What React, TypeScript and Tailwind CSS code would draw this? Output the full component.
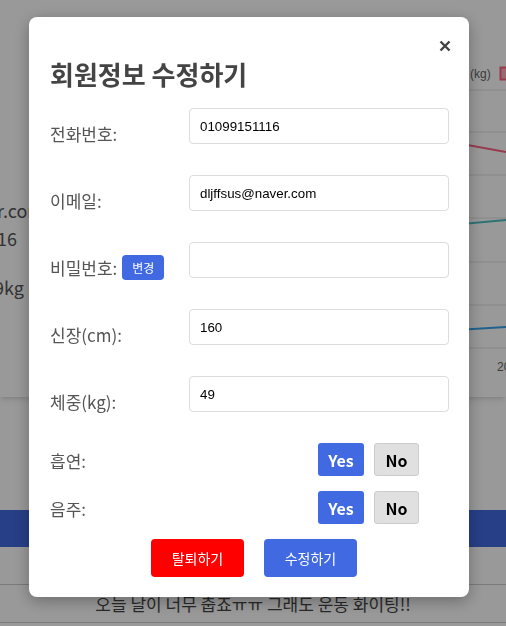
import React from "react";

const font = { fontFamily: '"Noto Sans CJK KR", "Noto Sans", sans-serif' };

function Field({ label, value, extra }: { label: string; value: string; extra?: boolean }) {
  return (
    <div className="flex h-9 items-end">
      <div className="-mb-0.5 flex w-[139px] items-center text-[17px] leading-6 text-[#555]">
        <span>{label}</span>
        {extra && (
          <button className="ml-[5px] h-[25px] w-[42px] rounded bg-[#4169e1] text-xs leading-[25px] text-white">
            변경
          </button>
        )}
      </div>
      <input
        defaultValue={value}
        className="h-9 flex-1 rounded border border-[#ddd] bg-white pl-[10px] text-[13.33px] text-black outline-none"
        style={{ fontFamily: '"Liberation Sans", Arial, sans-serif' }}
      />
    </div>
  );
}

function Toggle({ label }: { label: string }) {
  return (
    <div className="flex h-[33px] items-center">
      <span className="flex-1 pt-[3px] text-[17px] leading-6 text-[#555]">{label}</span>
      <div className="mr-[30px] flex gap-[10px]">
        <button className="h-[33px] w-[46px] rounded-[3px] bg-[#4169e1] text-base font-bold text-white">Yes</button>
        <button className="h-[33px] w-[45px] rounded-[3px] border border-[#ccc] bg-[#e0e0e0] text-base font-bold text-black">
          No
        </button>
      </div>
    </div>
  );
}

export default function App() {
  return (
    <div className="relative h-[626px] w-[506px] overflow-hidden bg-white" style={font}>
      {/* page behind the modal */}
      <div className="flex h-[397px] bg-white shadow-md">
        <div className="flex w-[250px] flex-col pt-[196px] text-lg text-[#555]">
          <div className="flex w-[44px] justify-end whitespace-nowrap leading-7">dljffsus@naver.com</div>
          <div className="flex w-[17px] justify-end whitespace-nowrap leading-7">01099151116</div>
          <div className="mt-[21px] flex w-[24px] justify-end whitespace-nowrap leading-7">49kg</div>
        </div>
        <div className="flex-1">
          <svg width="256" height="397" viewBox="0 0 256 397">
            {[90, 132, 175, 218, 262, 305, 348].map((y) => (
              <line key={y} x1="180" y1={y} x2="256" y2={y} stroke="#e2e2e2" strokeWidth="1" />
            ))}
            <text x="220" y="78" fontSize="12" fill="#666" fontFamily="Liberation Sans, sans-serif">
              (kg)
            </text>
            <rect x="250.5" y="67.5" width="12" height="12" fill="rgba(255,99,132,0.5)" stroke="#ff6384" strokeWidth="2" />
            <line x1="190" y1="140" x2="256" y2="152" stroke="#ff6384" strokeWidth="2" />
            <line x1="190" y1="226" x2="256" y2="220" stroke="#4bc0c0" strokeWidth="2" />
            <line x1="190" y1="331" x2="256" y2="327" stroke="#36a2eb" strokeWidth="2" />
            <text x="247" y="371" fontSize="12" fill="#666" fontFamily="Liberation Sans, sans-serif">
              2023
            </text>
          </svg>
        </div>
      </div>
      <div className="mt-[113px]">
        <div className="h-[37px] bg-[#4169e1]" />
        <div className="h-[38px] border-b border-[#ccc]" />
        <div className="flex h-[38px] items-center justify-center border-b border-[#ccc] text-[17px] text-[#444]">
          오늘 날이 너무 춥죠ㅠㅠ 그래도 운동 화이팅!!
        </div>
      </div>

      {/* overlay */}
      <div className="fixed inset-0 bg-black/40" />

      {/* modal */}
      <div className="fixed left-[29px] top-[17px] w-[440px] rounded-lg bg-white pb-5 pl-[21px] pr-5 pt-5 shadow-[0_4px_16px_rgba(0,0,0,0.3)]">
        <button className="absolute right-[18px] top-[23px] flex h-3 w-3 items-center justify-center">
          <svg width="12" height="12" viewBox="0 0 12 12">
            <path d="M1.5 1.5 L10.5 10.5 M10.5 1.5 L1.5 10.5" stroke="#444" strokeWidth="2.4" strokeLinecap="butt" />
          </svg>
        </button>
        <h2 className="mb-[17px] mt-[19px] text-[26px] font-bold leading-[35px] text-[#444]">회원정보 수정하기</h2>
        <div className="flex flex-col gap-[31px]">
          <Field label="전화번호:" value="01099151116" />
          <Field label="이메일:" value="dljffsus@naver.com" />
          <Field label="비밀번호:" value="" extra />
          <Field label="신장(cm):" value="160" />
          <Field label="체중(kg):" value="49" />
        </div>
        <div className="mt-[31px] flex flex-col gap-[15px]">
          <Toggle label="흡연:" />
          <Toggle label="음주:" />
          <div className="flex justify-center gap-5 pl-[9px]">
            <button className="h-[38px] w-[93px] rounded bg-[#ff0000] text-sm text-white">탈퇴하기</button>
            <button className="h-[38px] w-[93px] rounded bg-[#4169e1] text-sm text-white">수정하기</button>
          </div>
        </div>
      </div>
    </div>
  );
}
